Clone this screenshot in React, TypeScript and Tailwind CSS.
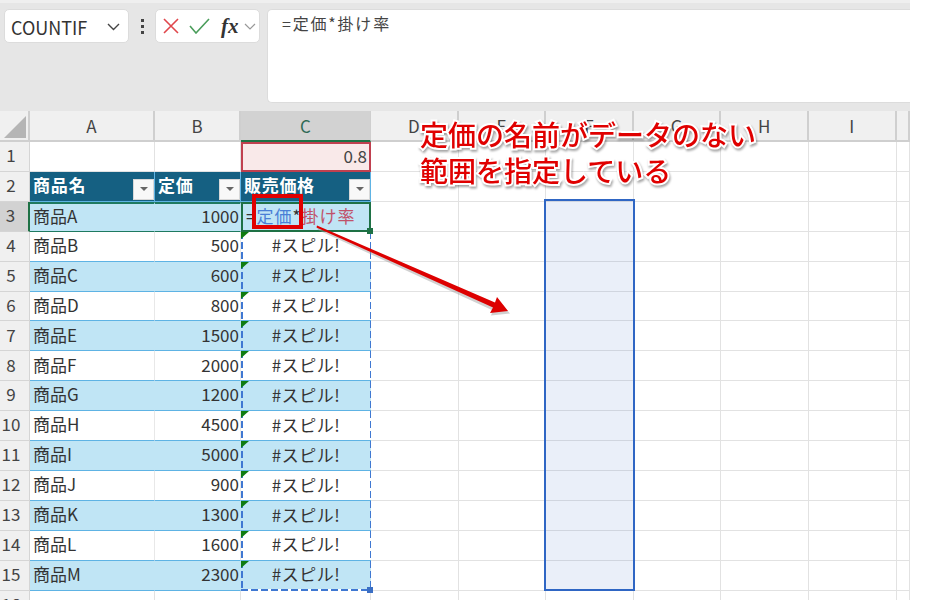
import React from "react";

const items: [string, number][] = [
  ["商品A", 1000], ["商品B", 500], ["商品C", 600], ["商品D", 800], ["商品E", 1500],
  ["商品F", 2000], ["商品G", 1200], ["商品H", 4500], ["商品I", 5000], ["商品J", 900],
  ["商品K", 1300], ["商品L", 1600], ["商品M", 2300],
];
const base = "flex items-center min-w-0 whitespace-nowrap border-r border-b box-border";
const plain = "border-[#e2e2e2]";
const head = "justify-center border-r-2 border-b-2 border-[#cfcfcf] bg-[#f0f0f0] text-[#444] text-[17px]";
const tableHead = "relative bg-[#156082] text-white font-semibold pl-[3px] pb-[3px] tracking-[0.7px] border-[#5eb3e4]";
const dashY = "bg-[repeating-linear-gradient(to_bottom,#3f78d2_0,#3f78d2_7px,transparent_7px,transparent_10px)]";
const dashX = "bg-[repeating-linear-gradient(to_right,#3f78d2_0,#3f78d2_7px,transparent_7px,transparent_10px)]";

function Filter() {
  return (
    <span className="absolute right-0 bottom-[1px] w-[21px] h-[21px] bg-[#f8f8f8] border border-[#d8d8d8] flex items-center justify-center">
      <span className="w-0 h-0 border-x-[4px] border-x-transparent border-t-[4px] border-t-[#666]" />
    </span>
  );
}

function RowHead({ n, active }: { n: number; active?: boolean }) {
  return (
    <div className={`${base} justify-center pr-[7px] pb-[3px] text-[17px] text-[#444] border-[#d5d5d5] ${active ? "bg-[#d2d2d2] border-r-2 border-r-[#1e7145]" : "bg-[#f0f0f0]"}`}>
      {n}
    </div>
  );
}

function Marker() {
  return <span className="absolute left-0 top-0 w-0 h-0 border-t-[7px] border-t-[#107c10] border-r-[8px] border-r-transparent" />;
}

export default function App() {
  return (
    <div className="relative w-[925px] h-[600px] overflow-hidden bg-white text-[#333] text-[17px] font-['Noto_Sans_CJK_JP','Noto_Sans',sans-serif]">
      <div className="w-[910px] h-[111px] bg-[#e6e6e6] border-t-[3px] border-t-[#efefef] pt-[6px] pl-[4px] flex items-start">
        <div className="w-[125px] h-[34px] bg-white rounded-[5px] flex items-center justify-between pl-[6px] pr-[8px] pt-[2px] text-[18px] text-[#333] border border-[#dcdcdc]">
          <span>COUNTIF</span>
          <svg width="13" height="8" viewBox="0 0 13 8" fill="none" stroke="#444" strokeWidth="1.4"><path d="M1 1l5.5 5.5L12 1" /></svg>
        </div>
        <div className="w-[26px] h-[34px] flex flex-col items-center justify-center gap-[3px]">
          <span className="w-[3px] h-[3px] bg-[#444]" />
          <span className="w-[3px] h-[3px] bg-[#444]" />
          <span className="w-[3px] h-[3px] bg-[#444]" />
        </div>
        <div className="w-[105px] h-[34px] bg-white rounded-[5px] flex items-center pl-[7px] border border-[#dcdcdc]">
          <svg width="16" height="16" viewBox="0 0 16 16" fill="none" stroke="#e0474c" strokeWidth="1.6"><path d="M1 1l14 14M15 1L1 15" /></svg>
          <svg className="ml-[10px]" width="21" height="16" viewBox="0 0 21 16" fill="none" stroke="#4a9d5b" strokeWidth="1.6"><path d="M1 8l6 7L20 1" /></svg>
          <span className="ml-[11px] text-[21px] leading-none font-bold italic text-[#333] font-['Liberation_Serif',serif]">fx</span>
          <svg className="ml-[5px]" width="12" height="7" viewBox="0 0 12 7" fill="none" stroke="#999" strokeWidth="1.2"><path d="M1 1l5 5 5-5" /></svg>
        </div>
        <div className="ml-[7px] flex-1 h-[94px] bg-white rounded-l-[5px] pl-[14px] pt-[1px] text-[16px] tracking-[1.8px] text-[#444] border border-[#dcdcdc] border-r-0">
          =定価*掛け率
        </div>
      </div>

      <div className="w-[910px] grid grid-cols-[30px_125px_86px_130px_repeat(6,87.6px)_1fr] grid-rows-[31px_repeat(16,29.92px)]">
        {/* column heads */}
        <div className={`${base} ${head} relative`}>
          <svg className="absolute left-[4px] top-[5px]" width="22" height="22" viewBox="0 0 22 22"><path d="M22 0v22H0z" fill="#b5b5b5" /></svg>
        </div>
        {["A", "B"].map((c) => <div key={c} className={`${base} ${head}`}>{c}</div>)}
        <div className={`${base} justify-center bg-[#d2d2d2] text-[#2f6b55] border-r-[#cfcfcf] border-b-2 border-b-[#1e7145]`}>C</div>
        {["D", "E", "F", "G", "H", "I"].map((c) => <div key={c} className={`${base} ${head}`}>{c}</div>)}
        <div className={`${base} ${head}`} />

        {/* row 1 */}
        <RowHead n={1} />
        <div className={`${base} ${plain}`} />
        <div className={`${base} ${plain}`} />
        <div className="flex items-center justify-end pr-[2px] pb-[3px] box-border bg-[#f9e9e9] border-2 border-[#c0404f] text-[#444]">0.8</div>
        {Array.from({ length: 7 }, (_, i) => <div key={i} className={`${base} ${plain}`} />)}

        {/* row 2 */}
        <RowHead n={2} />
        <div className={`${base} ${tableHead}`}>商品名<Filter /></div>
        <div className={`${base} ${tableHead}`}>定価<Filter /></div>
        <div className={`${base} ${tableHead}`}>販売価格<Filter /></div>
        {Array.from({ length: 7 }, (_, i) => <div key={i} className={`${base} ${plain}`} />)}

        {/* rows 3-15 */}
        {items.map(([name, price], i) => {
          const band = i % 2 === 0;
          const first = i === 0;
          const last = i === items.length - 1;
          const fill = band ? "bg-[#c0e5f5]" : "bg-white";
          const line = first ? "border-y-2 border-y-[#1e7a60] border-r-[#c0e5f5]" : band ? "border-[#5eb3e4] border-r-[#c0e5f5]" : "border-[#5eb3e4] border-r-[#e8e8e8]";
          return (
            <React.Fragment key={name}>
              <RowHead n={i + 3} active={first} />
              <div className={`${base} ${fill} ${line} pl-[3px] pb-[3px]`}>{name}</div>
              <div className={`${base} ${fill} ${line} justify-end pr-[1px] pb-[3px]`}>{price}</div>
              {first ? (
                <div className={`relative flex items-center box-border pl-[3px] pb-[2px] whitespace-nowrap ${fill} border-2 border-[#1e7145] text-[17px] tracking-[1px]`}>
                  <span>=</span>
                  <span className="text-[#4a7fd6]">定価</span>
                  <span>*</span>
                  <span className="text-[#c0526a]">掛け率</span>
                  <span className="absolute right-[-4px] bottom-[-4px] w-[6px] h-[6px] bg-[#1e7145] z-10" />
                </div>
              ) : (
                <div className={`relative flex items-center justify-center box-border pb-[3px] whitespace-nowrap tracking-[0.5px] ${fill}`}>
                  <span className="absolute inset-x-0 bottom-0 h-px bg-[#5eb3e4]" />
                  <span className={`absolute left-0 inset-y-0 w-[1.5px] ${dashY}`} />
                  <span className={`absolute right-0 inset-y-0 w-[1.5px] ${dashY}`} />
                  {last && <span className="absolute inset-x-0 bottom-0 h-[2px] bg-white" />}
                  {last && <span className={`absolute inset-x-0 bottom-0 h-[2px] ${dashX}`} />}
                  <Marker />
                  #スピル!
                  {last && <span className="absolute right-[-2px] bottom-[-2px] w-[6px] h-[6px] bg-[#3b6fc4]" />}
                </div>
              )}
              {Array.from({ length: 7 }, (_, k) => <div key={k} className={`${base} ${plain}`} />)}
            </React.Fragment>
          );
        })}

        {/* row 16 */}
        <RowHead n={16} />
        {Array.from({ length: 10 }, (_, i) => <div key={i} className={`${base} ${plain}`} />)}
      </div>

      {/* annotations */}
      <div className="absolute left-[544px] top-[199px] w-[91px] h-[392px] box-border border-2 border-[#2f66c4] bg-[#2f66c4]/10" />
      <div className="absolute left-[252px] top-[194px] w-[51px] h-[35px] box-border border-[4px] border-[#e00000]" />
      <svg className="absolute left-0 top-0 pointer-events-none" width="925" height="600" viewBox="0 0 925 600">
        <path d="M317 228L492 308.5L490 313.5L509 311.5L497 297.5L495 303L316 225z" fill="#9a9a9a" opacity="0.45" transform="translate(1 2)" />
        <path d="M316.5 227.5L493 307.5L490 313L508 311L497 297L495 302.5L317 225.5z" fill="#dd0000" />
      </svg>
      <div className="absolute left-[420px] top-[116px] text-[28px] leading-[36px] font-medium text-[#e00000] whitespace-nowrap [-webkit-text-stroke:4px_white] [paint-order:stroke_fill] drop-shadow-[1px_2px_1px_rgba(0,0,0,0.35)]">
        <div>定価の名前がデータのない</div>
        <div>範囲を指定している</div>
      </div>
    </div>
  );
}
